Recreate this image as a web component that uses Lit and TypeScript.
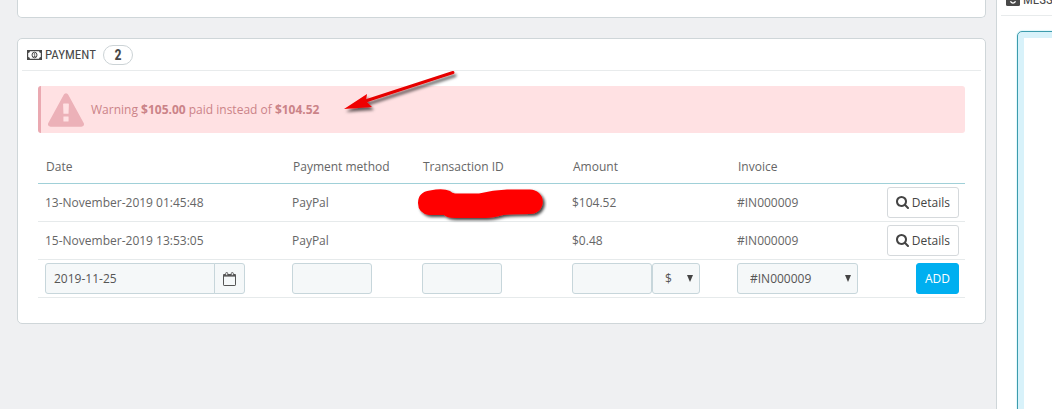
import { LitElement, html, css, svg } from "lit";
import { customElement, state } from "lit/decorators.js";

interface Payment {
  date: string;
  method: string;
  amount: string;
  invoice: string;
  hidden: boolean;
}

const moneyIcon = svg`
  <svg class="money" viewBox="0 0 15 10" width="15" height="10" aria-hidden="true">
    <path fill="currentColor" fill-rule="evenodd" d="M0 0h15v10H0zM3 1.2A2 2 0 0 1 1.2 3v4A2 2 0 0 1 3 8.8h9A2 2 0 0 1 13.8 7V3A2 2 0 0 1 12 1.2z"/>
    <ellipse cx="7.5" cy="5" rx="2.5" ry="2.8" fill="none" stroke="currentColor" stroke-width="1"/>
    <path d="M6.7 4l1-.7v3.2M6.6 6.5h2" fill="none" stroke="currentColor" stroke-width=".8"/>
  </svg>`;

const mailIcon = svg`
  <svg viewBox="0 0 14 12" width="14" height="12" aria-hidden="true">
    <rect width="14" height="12" rx="1.5" fill="currentColor"/>
    <path d="M4.4 7.4Q7 10.8 9.6 7.4" fill="none" stroke="#fff" stroke-width="1.4"/>
  </svg>`;

const warningIcon = svg`
  <svg viewBox="0 0 1792 1664" width="36" height="34" aria-hidden="true">
    <path fill="currentColor" d="M1024 1375v-190q0-14-9.5-23.5t-22.5-9.5h-192q-13 0-22.5 9.5t-9.5 23.5v190q0 14 9.5 23.5t22.5 9.5h192q13 0 22.5-9.5t9.5-23.5zm-2-374l18-459q0-12-10-19-13-11-24-11h-220q-11 0-24 11-10 7-10 21l17 457q0 10 10 16.5t24 6.5h185q14 0 23.5-6.5t10.5-16.5zm-14-934l768 1408q35 63-2 126-17 29-46.5 46t-63.5 17h-1536q-34 0-63.5-17t-46.5-46q-37-63-2-126l768-1408q17-31 47-49t65-18 65 18 47 49z"/>
  </svg>`;

const searchIcon = svg`
  <svg viewBox="64 128 1664 1664" width="13" height="13" aria-hidden="true">
    <path fill="currentColor" d="M1216 832q0-185-131.5-316.5t-316.5-131.5-316.5 131.5-131.5 316.5 131.5 316.5 316.5 131.5 316.5-131.5 131.5-316.5zm512 832q0 52-38 90t-90 38q-54 0-90-38l-343-342q-179 124-399 124-143 0-273.5-55.5t-225-150-150-225-55.5-273.5 55.5-273.5 150-225 225-150 273.5-55.5 273.5 55.5 225 150 150 225 55.5 273.5q0 220-124 399l343 343q37 37 37 90z"/>
  </svg>`;

const calendarIcon = svg`
  <svg viewBox="0 0 13 14" width="13" height="14" aria-hidden="true">
    <rect x=".5" y="2.5" width="12" height="11" rx=".6" fill="none" stroke="currentColor"/>
    <path d="M.5 2h12v2.6H.5z" fill="currentColor"/>
    <rect x="2.7" y=".5" width="2" height="3" rx=".9" fill="#f5f8f9" stroke="currentColor" stroke-width=".9"/>
    <rect x="8.3" y=".5" width="2" height="3" rx=".9" fill="#f5f8f9" stroke="currentColor" stroke-width=".9"/>
  </svg>`;

const caretIcon = svg`
  <svg class="caret" viewBox="0 0 6 7" width="6" height="7" aria-hidden="true">
    <path d="M0 0h6L3 7z" fill="#444"/>
  </svg>`;

@customElement("app-root")
export class AppRoot extends LitElement {
  static styles = css`
    :host {
      display: block;
      font: 12px/18px "Open Sans", sans-serif;
      color: #666;
    }
    * { box-sizing: border-box; }
    svg { display: block; flex: none; }
    .page {
      display: grid;
      grid-template-columns: minmax(0, 1fr) 56px;
      column-gap: 10px;
      height: 100vh;
      padding-left: 17px;
      overflow: hidden;
      background: #eff0f2;
    }
    .main { display: flex; flex-direction: column; gap: 20px; }
    .panel {
      background: #fff;
      border: 1px solid #cfd6d9;
      border-radius: 5px;
      padding: 0 4px;
    }
    .previous { height: 18px; flex: none; border-top: 0; border-radius: 0 0 5px 5px; }
    .heading {
      display: flex;
      align-items: center;
      gap: 3px;
      height: 32px;
      margin: 0;
      padding: 0 5px;
      border-bottom: 1px solid #e8ebec;
      font: 13px/20px "Ubuntu Condensed", "Roboto Condensed", "Open Sans Condensed", "Arial Narrow", sans-serif;
      color: #484848;
      white-space: nowrap;
    }
    .badge {
      width: 30px;
      height: 20px;
      margin-left: 4px;
      border: 1px solid #ccd3d6;
      border-radius: 10px;
      font-size: 14px;
      font-weight: 700;
      line-height: 18px;
      text-align: center;
    }
    .body { padding: 15px 16px 25px; }
    .alert {
      position: relative;
      display: flex;
      align-items: center;
      gap: 7px;
      height: 47px;
      padding-left: 7px;
      border-left: 3px solid #eaa9b1;
      border-radius: 3px;
      background: #ffe1e3;
      color: #cb8388;
    }
    .alert svg { color: #ecb1b8; }
    .alert p { margin: 0; }
    .alert .arrow { position: absolute; left: 300px; top: -20px; }
    .table {
      width: 100%;
      margin-top: 15px;
      border-collapse: separate;
      border-spacing: 0;
      table-layout: fixed;
    }
    .date { width: 247px; }
    .method { width: 130px; }
    .transaction { width: 150px; }
    .amount { width: 165px; }
    .invoice { width: 150px; }
    th {
      height: 36px;
      padding: 2px 8px 0;
      border-bottom: 1px solid #a0d0d8;
      font-weight: 400;
      text-align: left;
    }
    td {
      position: relative;
      height: 38px;
      padding: 0 7px;
      border-bottom: 1px solid #e6eaeb;
    }
    td:last-child { padding-right: 6px; }
    .actions { display: flex; justify-content: flex-end; }
    .scribble { position: absolute; left: -2px; top: 0; }
    .button {
      display: flex;
      align-items: center;
      gap: 3px;
      height: 31px;
      padding: 0 8px;
      border: 1px solid #d5d9dc;
      border-radius: 3px;
      background: #fff;
      color: #444;
      font: inherit;
    }
    .add { background: #00aff0; border-color: #00aff0; color: #fff; }
    .field {
      height: 31px;
      min-width: 0;
      width: 80px;
      padding: 0 8px;
      border: 1px solid #c7d6db;
      border-radius: 3px;
      background: #f5f8f9;
      color: #555;
      font: inherit;
    }
    .group { display: flex; }
    .date-field { width: 170px; border-radius: 3px 0 0 3px; }
    .addon {
      display: grid;
      place-items: center;
      width: 31px;
      height: 31px;
      margin-left: -1px;
      padding: 0;
      border: 1px solid #c7d6db;
      border-radius: 0 3px 3px 0;
      background: #f5f8f9;
      color: #555;
    }
    .select { position: relative; display: block; width: 121px; }
    .select .field { appearance: none; width: 100%; padding: 0 12px; }
    .currency { width: 48px; }
    .caret { position: absolute; right: 7px; top: 12px; pointer-events: none; }
    .side { min-width: 0; overflow: hidden; }
    .messages { width: 320px; margin-top: -17px; }
    .messages .body { padding-bottom: 0; }
    .message {
      display: block;
      width: 100%;
      height: 100vh;
      border: 1px solid #3c9cad;
      border-radius: 5px;
      outline: none;
      resize: none;
      background: #fff;
      box-shadow: inset 0 0 0 6px #d8f2fa, 0 0 1px 1px #e4f8fb;
      font: inherit;
    }
  `;

  @state() private payments: Payment[] = [
    { date: "13-November-2019 01:45:48", method: "PayPal", amount: "$104.52", invoice: "#IN000009", hidden: true },
    { date: "15-November-2019 13:53:05", method: "PayPal", amount: "$0.48", invoice: "#IN000009", hidden: false },
  ];

  private renderScribble() {
    return html`<svg class="scribble" viewBox="0 0 134 40" width="134" height="40" aria-label="Redacted" role="img">
      <defs><filter id="soft" x="-10%" y="-30%" width="125%" height="170%"><feDropShadow dx="2" dy="2" stdDeviation="1.8" flood-color="#000" flood-opacity=".75"/></filter></defs>
      <path filter="url(#soft)" fill="#f00" d="M5 19Q5 8 17 6.5Q30 4 37 7Q39 9 42 9.5H66Q80 6 94 5.5H117A12.5 12 0 0 1 117 30Q100 30 90 31Q80 34 72 34H42Q34 34 31 31H16Q5 29 5 19z"/>
    </svg>`;
  }

  private renderRow(p: Payment) {
    return html`<tr>
      <td>${p.date}</td>
      <td>${p.method}</td>
      <td>${p.hidden ? this.renderScribble() : ""}</td>
      <td>${p.amount}</td>
      <td>${p.invoice}</td>
      <td><div class="actions"><button class="button" type="button">${searchIcon}Details</button></div></td>
    </tr>`;
  }

  render() {
    return html`<div class="page">
      <main class="main">
        <section class="panel previous"></section>
        <section class="panel">
          <h3 class="heading">${moneyIcon}<span>PAYMENT</span><span class="badge">${this.payments.length}</span></h3>
          <div class="body">
            <div class="alert" role="alert">
              ${warningIcon}
              <p>Warning <strong>$105.00</strong> paid instead of <strong>$104.52</strong></p>
              <svg class="arrow" viewBox="0 0 124 54" width="124" height="54" aria-hidden="true">
                <defs><filter id="shade" x="-10%" y="-20%" width="125%" height="160%"><feDropShadow dx="2" dy="3" stdDeviation="1.8" flood-color="#000" flood-opacity=".6"/></filter></defs>
                <g filter="url(#shade)" fill="#f00000">
                  <path d="M26 34.5L112 6.5" stroke="#e60000" stroke-width="3" stroke-linecap="round"/>
                  <path d="M3 43L26 28L25 35L31 41z"/>
                </g>
              </svg>
            </div>
            <table class="table">
              <colgroup>
                <col class="date"><col class="method"><col class="transaction"><col class="amount"><col class="invoice"><col>
              </colgroup>
              <thead>
                <tr><th>Date</th><th>Payment method</th><th>Transaction ID</th><th>Amount</th><th>Invoice</th><th></th></tr>
              </thead>
              <tbody>
                ${this.payments.map((p) => this.renderRow(p))}
                <tr>
                  <td>
                    <div class="group">
                      <input class="field date-field" type="text" aria-label="Date" .value=${"2019-11-25"}>
                      <button class="addon" type="button" aria-label="Choose date">${calendarIcon}</button>
                    </div>
                  </td>
                  <td><input class="field" type="text" aria-label="Payment method"></td>
                  <td><input class="field" type="text" aria-label="Transaction ID"></td>
                  <td>
                    <div class="group">
                      <input class="field" type="text" aria-label="Amount">
                      <span class="select currency"><select class="field" aria-label="Currency"><option>$</option></select>${caretIcon}</span>
                    </div>
                  </td>
                  <td><span class="select"><select class="field" aria-label="Invoice"><option>#IN000009</option></select>${caretIcon}</span></td>
                  <td><div class="actions"><button class="button add" type="button">ADD</button></div></td>
                </tr>
              </tbody>
            </table>
          </div>
        </section>
      </main>
      <aside class="side">
        <section class="panel messages">
          <h3 class="heading">${mailIcon}<span>MESSAGES</span></h3>
          <div class="body"><textarea class="message" aria-label="Message"></textarea></div>
        </section>
      </aside>
    </div>`;
  }
}
